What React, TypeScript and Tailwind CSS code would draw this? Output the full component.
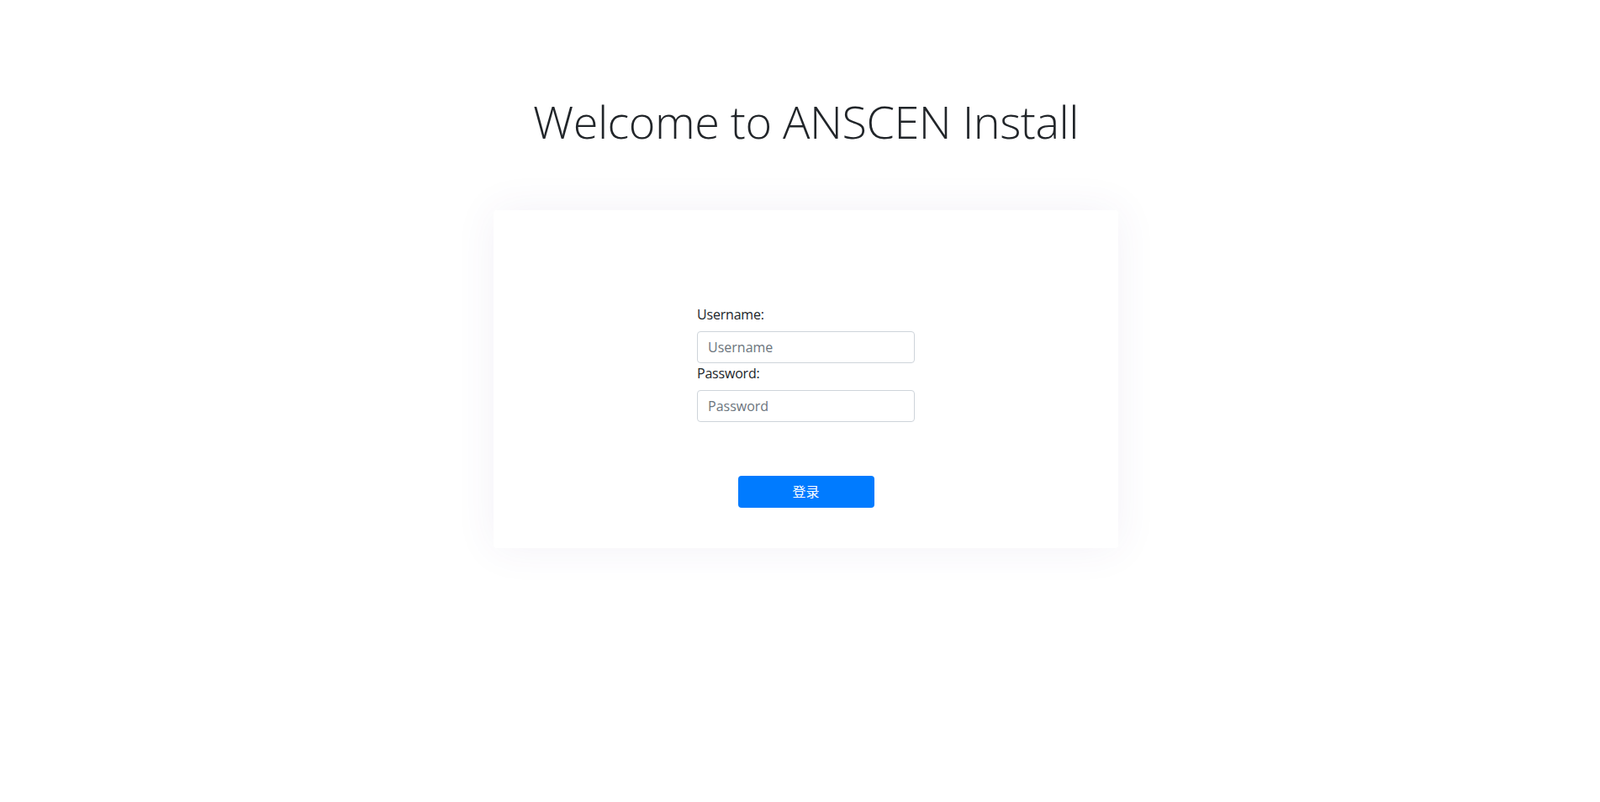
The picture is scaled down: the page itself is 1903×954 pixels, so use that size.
import { useState, type FormEvent } from "react";

const body = "font-['Segoe_UI','Open_Sans','Noto_Sans_CJK_SC',sans-serif]";

export default function App() {
  const [username, setUsername] = useState("");
  const [password, setPassword] = useState("");

  function handleSubmit(e: FormEvent) {
    e.preventDefault();
  }

  return (
    <div className={`min-h-screen bg-white text-[#212529] ${body}`}>
      <div className="flex flex-col items-center pl-[14px]">
        <h1 className="mt-[112px] text-[54px] font-light leading-[1.2] tracking-[-0.5px]">
          Welcome to ANSCEN Install
        </h1>
        <form
          onSubmit={handleSubmit}
          className="mt-[73px] flex h-[402px] w-[743px] flex-col items-center rounded bg-white pt-[112px] shadow-[0_0_50px_0_rgba(82,63,145,0.07)]"
        >
          <div className="w-[259px]">
            <label className="mb-2 block text-base leading-6 tracking-[-0.2px]">Username:</label>
            <input
              type="text"
              placeholder="Username"
              value={username}
              onChange={(e) => setUsername(e.target.value)}
              className="block h-[38px] w-full rounded border border-[#ced4da] px-3 text-base text-[#495057] placeholder:text-[#6c757d] focus:outline-none"
            />
            <label className="mb-2 block text-base leading-6 tracking-[-0.2px]">Password:</label>
            <input
              type="password"
              placeholder="Password"
              value={password}
              onChange={(e) => setPassword(e.target.value)}
              className="block h-[38px] w-full rounded border border-[#ced4da] px-3 text-base text-[#495057] placeholder:text-[#6c757d] focus:outline-none"
            />
          </div>
          <button
            type="submit"
            className="mt-16 h-[38px] w-[162px] rounded bg-[#007bff] text-base text-white"
          >
            登录
          </button>
        </form>
      </div>
    </div>
  );
}
